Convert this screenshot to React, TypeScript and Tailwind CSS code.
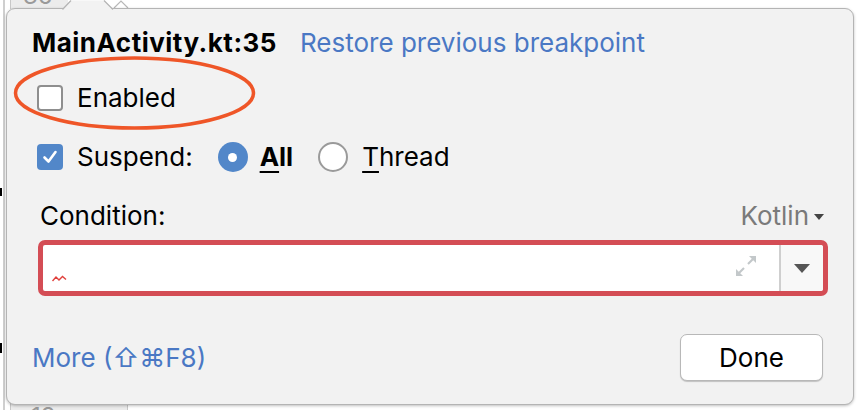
import React from "react";

const font = { fontFamily: "Inter, 'Noto Sans', 'Liberation Sans', sans-serif" };

function Checkbox({ checked }: { checked: boolean }) {
  if (checked) {
    return (
      <div className="w-[26px] h-[26px] rounded-[4px] bg-[#5287c9] flex items-center justify-center shrink-0">
        <svg width="18" height="18" viewBox="0 0 18 18">
          <path d="M3.5 9.5 L7.5 13.5 L14.5 4" fill="none" stroke="white" strokeWidth="2.6" strokeLinecap="round" strokeLinejoin="round" />
        </svg>
      </div>
    );
  }
  return <div className="w-[26px] h-[26px] rounded-[4px] bg-white border-2 border-[#8e8e8e] shrink-0" />;
}

function Radio({ checked }: { checked: boolean }) {
  if (checked) {
    return (
      <div className="w-[30px] h-[30px] rounded-full bg-[#5287c9] flex items-center justify-center shrink-0">
        <div className="w-[9px] h-[9px] rounded-full bg-white" />
      </div>
    );
  }
  return <div className="w-[30px] h-[30px] rounded-full bg-white border-2 border-[#9a9a9a] shrink-0" />;
}

export default function App() {
  return (
    <div className="relative w-[858px] h-[410px] bg-white overflow-hidden" style={font}>
      {/* background editor pieces */}
      <div className="absolute left-[3px] top-0 w-[2px] h-[410px] bg-[#cfcfcf]" />
      <div className="absolute left-0 top-[188px] w-[2px] h-[8px] bg-black" />
      <div className="absolute left-0 top-[343px] w-[2px] h-[10px] bg-black" />
      <div className="absolute left-[10px] top-0 w-[58px] h-[9px] bg-[#ececec] border-l border-[#c8c8c8] overflow-hidden">
        <div className="absolute left-[12px] top-[-16px] text-[24px] leading-[24px] text-[#9a9a9a]">36</div>
      </div>
      <div className="absolute left-[10px] top-[402px] w-[118px] h-[8px] bg-[#ececec] border-l border-r border-[#c8c8c8] overflow-hidden">
        <div className="absolute left-[20px] top-[3px] text-[24px] leading-[24px] text-[#9a9a9a]">13</div>
      </div>
      <svg className="absolute left-[112px] top-0" width="20" height="9" viewBox="0 0 20 9">
        <path d="M2 8 L9 1 L16 8" fill="none" stroke="#b8b8b8" strokeWidth="1.2" />
      </svg>

      {/* popup */}
      <div className="absolute left-[6px] top-[8px] w-[848px] h-[397px] rounded-[9px] bg-[#f2f2f2] border border-[#b4b4b4] shadow-[0_1px_3px_rgba(0,0,0,0.25)]">
        {/* arrow notch */}
        <svg className="absolute left-[55px] top-[-9px]" width="52" height="11" viewBox="0 0 52 11">
          <path d="M0 10 L9 0.5 L42 0.5 L51 10 Z" fill="#f2f2f2" />
          <path d="M0.5 9.5 L9 0.5 M42 0.5 L51 9.5" fill="none" stroke="#b4b4b4" strokeWidth="1.2" />
        </svg>

        <div className="flex flex-col pl-[25px] pr-[25px] text-[26px] leading-[30px]">
          <div className="h-[68px] flex items-center">
            <span className="font-bold text-black tracking-[0.5px]">MainActivity.kt:35</span>
            <span className="ml-[23px] text-[#4a78c4]">Restore previous breakpoint</span>
          </div>
          <div className="h-[42px] flex items-center pl-[5px] gap-[14px]">
            <Checkbox checked={false} />
            <span className="text-black">Enabled</span>
          </div>
          <div className="h-[76px] flex items-center pl-[5px]">
            <Checkbox checked={true} />
            <span className="ml-[14px] text-black">Suspend:</span>
            <div className="ml-[25px] flex items-center gap-[12px]">
              <Radio checked={true} />
              <span className="font-bold text-black"><span className="underline decoration-2 underline-offset-[5px]">A</span>ll</span>
            </div>
            <div className="ml-[25px] flex items-center gap-[14px]">
              <Radio checked={false} />
              <span className="text-black"><span className="underline decoration-2 underline-offset-[5px]">T</span>hread</span>
            </div>
          </div>
          <div className="h-[45px] flex items-center justify-between pl-[8px] pb-[3px]">
            <span className="text-black">Condition:</span>
            <span className="flex items-center text-[#7a7a7a] mr-[4px]">
              Kotlin
              <svg className="ml-[5px] mt-[2px]" width="10" height="6" viewBox="0 0 10 6"><path d="M0 0 L10 0 L5 6 Z" fill="#444" /></svg>
            </span>
          </div>
          <div className="ml-[6px] h-[56px] rounded-[7px] border-[5px] border-[#d44d55] bg-white flex">
            <div className="flex-1 relative">
              <svg className="absolute left-[9px] top-[30px]" width="15" height="7" viewBox="0 0 15 7">
                <path d="M0.5 6 L4 2 L7 5 L10.5 1.5 L14 4.5" fill="none" stroke="#e0403c" strokeWidth="1.4" />
              </svg>
              <svg className="absolute right-[20px] top-[8px]" width="26" height="26" viewBox="0 0 26 26">
                <path d="M15 11 L22 4" stroke="#c3c8ca" strokeWidth="2.2" />
                <path d="M16 3 L23 3 L23 10 Z" fill="#c3c8ca" />
                <path d="M11 15 L4 22" stroke="#c3c8ca" strokeWidth="2.2" />
                <path d="M3 16 L3 23 L10 23 Z" fill="#c3c8ca" />
              </svg>
            </div>
            <div className="w-[44px] border-l-2 border-[#cfcfcf] bg-[#f8f8f8] flex items-center justify-center rounded-r-[3px]">
              <svg width="16" height="9" viewBox="0 0 16 9"><path d="M0 0 L16 0 L8 9 Z" fill="#555" /></svg>
            </div>
          </div>
          <div className="mt-[38px] h-[47px] flex items-center justify-between">
            <span className="text-[#4a78c4]">More (⇧⌘F8)</span>
            <button className="mr-[5px] w-[143px] h-[47px] rounded-[7px] bg-white border border-[#b8b8b8] shadow-[0_1px_1px_rgba(0,0,0,0.2)] text-black">Done</button>
          </div>
        </div>
      </div>

      {/* annotation ellipse */}
      <svg className="absolute left-0 top-0 pointer-events-none" width="858" height="410" viewBox="0 0 858 410">
        <ellipse cx="134.5" cy="93" rx="119" ry="35" fill="none" stroke="#ef5628" strokeWidth="3.5" />
      </svg>
    </div>
  );
}
